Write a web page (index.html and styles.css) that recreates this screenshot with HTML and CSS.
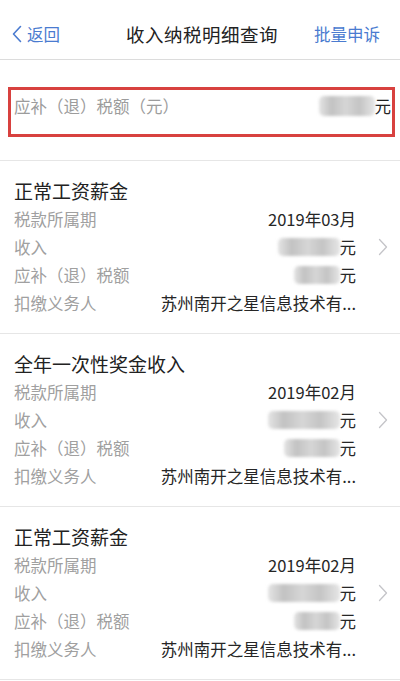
FILE: index.html
```html
<!DOCTYPE html>
<html lang="zh-CN">
<head>
<meta charset="utf-8">
<link rel="stylesheet" href="styles.css">
</head>
<body>
<div class="page">
  <header class="nav">
    <div class="nav-left">
      <svg class="back-icon" width="10" height="18" viewBox="0 0 10 18"><path d="M8.5 1.5 L1.5 9 L8.5 16.5" fill="none" stroke="#4a7bd0" stroke-width="1.6" stroke-linecap="round" stroke-linejoin="round"/></svg>
      <span>返回</span>
    </div>
    <div class="nav-title">收入纳税明细查询</div>
    <div class="nav-right">批量申诉</div>
  </header>

  <section class="summary">
    <div class="summary-box">
      <span class="summary-label">应补（退）税额（元）</span>
      <span class="summary-value"><span class="blur blur-wide"></span>元</span>
    </div>
  </section>

  <div class="card">
    <div class="card-body">
      <div class="card-title">正常工资薪金</div>
      <div class="row"><span class="label">税款所属期</span><span class="value">2019年03月</span></div>
      <div class="row"><span class="label">收入</span><span class="value"><span class="blur b1"></span>元</span></div>
      <div class="row"><span class="label">应补（退）税额</span><span class="value"><span class="blur b2"></span>元</span></div>
      <div class="row"><span class="label">扣缴义务人</span><span class="value">苏州南开之星信息技术有...</span></div>
    </div>
    <svg class="chev" width="10" height="18" viewBox="0 0 10 18"><path d="M1.5 1.5 L8.5 9 L1.5 16.5" fill="none" stroke="#c4c4c8" stroke-width="1.3" stroke-linecap="round" stroke-linejoin="round"/></svg>
  </div>

  <div class="card">
    <div class="card-body">
      <div class="card-title">全年一次性奖金收入</div>
      <div class="row"><span class="label">税款所属期</span><span class="value">2019年02月</span></div>
      <div class="row"><span class="label">收入</span><span class="value"><span class="blur b3"></span>元</span></div>
      <div class="row"><span class="label">应补（退）税额</span><span class="value"><span class="blur b4"></span>元</span></div>
      <div class="row"><span class="label">扣缴义务人</span><span class="value">苏州南开之星信息技术有...</span></div>
    </div>
    <svg class="chev" width="10" height="18" viewBox="0 0 10 18"><path d="M1.5 1.5 L8.5 9 L1.5 16.5" fill="none" stroke="#c4c4c8" stroke-width="1.3" stroke-linecap="round" stroke-linejoin="round"/></svg>
  </div>

  <div class="card">
    <div class="card-body">
      <div class="card-title">正常工资薪金</div>
      <div class="row"><span class="label">税款所属期</span><span class="value">2019年02月</span></div>
      <div class="row"><span class="label">收入</span><span class="value"><span class="blur b3"></span>元</span></div>
      <div class="row"><span class="label">应补（退）税额</span><span class="value"><span class="blur b2"></span>元</span></div>
      <div class="row"><span class="label">扣缴义务人</span><span class="value">苏州南开之星信息技术有...</span></div>
    </div>
    <svg class="chev" width="10" height="18" viewBox="0 0 10 18"><path d="M1.5 1.5 L8.5 9 L1.5 16.5" fill="none" stroke="#c4c4c8" stroke-width="1.3" stroke-linecap="round" stroke-linejoin="round"/></svg>
  </div>
</div>
</body>
</html>
```

FILE: styles.css
```css
* { box-sizing: border-box; }
html, body { margin: 0; padding: 0; background: #f2f2f4; }
body {
  font-family: "Noto Sans CJK SC", "Noto Sans", sans-serif;
  color: #222;
}
.page { width: 400px; height: 681px; overflow: hidden; background: #ffffff; }

.nav {
  height: 60px;
  display: grid;
  grid-template-columns: 1fr auto 1fr;
  align-items: center;
  padding: 8px 12px 0 12px;
  border-bottom: 1px solid #dcdcdc;
  background: #fff;
}
.nav-left {
  display: flex;
  align-items: center;
  gap: 5px;
  color: #4a7bd0;
  font-size: 16.5px;
}
.nav-title { font-size: 18.5px; color: #222; letter-spacing: 0.5px; padding-left: 4px; }
.nav-right {
  color: #4a7bd0;
  font-size: 16.5px;
  text-align: right;
  white-space: nowrap;
  padding-right: 8px;
}

.summary {
  padding: 27px 5px 23px 8px;
  border-bottom: 1px solid #e6e6e6;
}
.summary-box {
  height: 50px;
  border: 3px solid #d8413f;
  display: flex;
  align-items: center;
  justify-content: space-between;
  padding: 0 1px 12px 3px;
}
.summary-label { font-size: 16.5px; color: #9c9c9c; }
.summary-value { font-size: 16.5px; color: #222; display: flex; align-items: center; }

.blur {
  display: inline-block;
  height: 18px;
  background: linear-gradient(90deg, #e4e4e4 0%, #c2c2c2 22%, #d6d6d6 48%, #c4c4c4 72%, #e6e6e6 100%);
  filter: blur(1.5px);
  border-radius: 5px;
  margin-right: 0;
}
.blur-wide { width: 56px; height: 20px; }
.b1 { width: 62px; }
.b2 { width: 46px; }
.b3 { width: 72px; }
.b4 { width: 56px; }

.card {
  height: 173px;
  display: flex;
  align-items: center;
  border-bottom: 1px solid #e6e6e6;
  padding: 0 12px 0 14px;
}
.card-body { flex: 1; padding-right: 22px; }
.card-title {
  font-size: 19px;
  line-height: 28px;
  color: #222;
}
.row {
  display: flex;
  justify-content: space-between;
  align-items: center;
  height: 28px;
  font-size: 16.5px;
}
.label { color: #a0a0a0; }
.value { color: #262626; display: flex; align-items: center; }
.chev { flex: none; }
```
